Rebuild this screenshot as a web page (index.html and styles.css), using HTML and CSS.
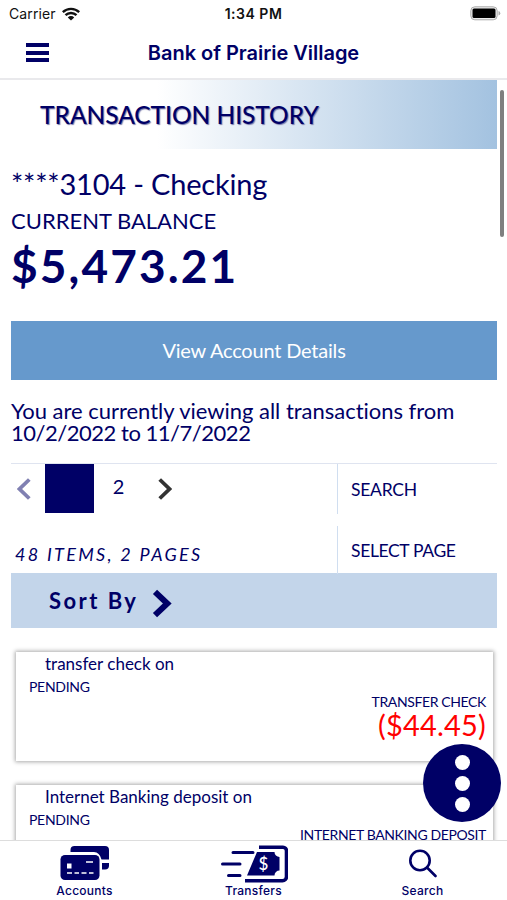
FILE: index.html
```html
<!DOCTYPE html>
<html lang="en">
<head>
<meta charset="utf-8" />
<meta name="viewport" content="width=device-width,initial-scale=1.0" />
<title>Bank of Prairie Village</title>
<link rel="stylesheet" href="styles.css">
</head>
<body>
<div class="app">
	<div class="status-bar">
		<div class="carrier">
			<span>Carrier</span>
			<svg class="wifi" viewBox="0 0 18 14"><path d="M.8 5.2a11.8 11.8 0 0 1 16.4 0" /><path d="M3.5 8.2a7.8 7.8 0 0 1 11 0" /><path class="dot" d="M9 13.6 5.8 10.4a4.6 4.6 0 0 1 6.4 0z" /></svg>
		</div>
		<div class="time">1:34 PM</div>
		<div class="power">
			<svg class="battery" viewBox="0 0 31 15"><rect class="shell" x=".8" y=".8" width="26.4" height="13" rx="4" /><rect x="2.5" y="2.5" width="23" height="9.6" rx="1.5" /><path class="tip" d="M28.5 5v4.6q1.8-.6 1.8-2.3T28.5 5z" /></svg>
		</div>
	</div>
	<div class="nav-bar">
		<a class="btn-menu" href="#" aria-label="Menu"><i></i><i></i><i></i></a>
		<h1>Bank of Prairie Village</h1>
	</div>
	<div class="content">
		<div class="scrollbar"></div>
		<h2 class="banner"><span>TRANSACTION HISTORY</span></h2>
		<div class="account">
			<p class="name">****3104 - Checking</p>
			<p class="label">CURRENT BALANCE</p>
			<p class="balance">$5,473.21</p>
		</div>
		<a class="btn-details" href="#"><span>View Account Details</span></a>
		<p class="range"><span class="line">You are currently viewing all transactions from</span> <span class="line dates">10/2/2022 to 11/7/2022</span></p>
		<div class="pager">
			<div class="pages">
				<svg class="prev" viewBox="0 0 14 22"><path d="M12.3 1.5 2.5 11l9.8 9.5" /></svg>
				<a class="page current" href="#"></a>
				<a class="page" href="#">2</a>
				<svg class="next" viewBox="0 0 14 22"><path d="M1.7 1.5 11.5 11l-9.8 9.5" /></svg>
			</div>
			<a class="tool search" href="#"><span>SEARCH</span></a>
			<p class="count"><span>48 ITEMS, 2 PAGES</span></p>
			<a class="tool select" href="#"><span>SELECT PAGE</span></a>
		</div>
		<div class="sort">
			<span>Sort By</span>
			<svg viewBox="0 0 20 29"><path d="m3 2.8 12.3 11.7L3 26.2" /></svg>
		</div>
		<div class="list">
			<div class="item">
				<p class="desc">transfer check on</p>
				<p class="state">PENDING</p>
				<p class="type">TRANSFER CHECK</p>
				<p class="amount">($44.45)</p>
			</div>
			<div class="item">
				<p class="desc">Internet Banking deposit on</p>
				<p class="state">PENDING</p>
				<p class="type">INTERNET BANKING DEPOSIT</p>
			</div>
		</div>
	</div>
	<a class="btn-more" href="#" aria-label="More"><i></i><i></i><i></i></a>
	<div class="tab-bar">
		<a class="tab" href="#">
			<svg class="icon-accounts" viewBox="0 0 50 36">
				<path d="M10.5 7V5a4 4 0 0 1 4-4H45a4 4 0 0 1 4 4v9.5h-7.5Q39.500 7 34 7z" />
				<path d="M42 18h7v2.5a4 4 0 0 1-4 4h-3z" />
				<rect x=".5" y="10" width="39" height="25" rx="4.5" />
				<rect class="cut" x="7" y="18.5" width="4.5" height="5" />
				<path class="line" d="M26 17h7M7 28h5m2.500 0h4.500m2.500 0h5m2.500 0h4.500" />
			</svg>
			<span>Accounts</span>
		</a>
		<a class="tab" href="#">
			<svg class="icon-transfers" viewBox="0 0 68 38">
				<path class="line" d="M13 7.5h20M2.500 19H20M8.500 30.500H20" />
				<path class="frame" d="M39 2.200h24a3.500 3.500 0 0 1 3.500 3.500v26A4 4 0 0 1 62.500 35.700H25" />
				<path d="M37 7h17.500a5 5 0 0 0 5 5v13.500a5 5 0 0 0-5 5H27z" />
				<text x="43.500" y="25">$</text>
			</svg>
			<span>Transfers</span>
		</a>
		<a class="tab" href="#">
			<svg class="icon-search" viewBox="0 0 28 29"><circle cx="11" cy="11.500" r="9.700" /><path d="m18 18.500 8.500 8.500" /></svg>
			<span>Search</span>
		</a>
	</div>
</div>
</body>
</html>
```
FILE: styles.css
```css
*{margin: 0;padding: 0;box-sizing: border-box;}
html,body {height: 100%;overflow: hidden;}
body{background-color: #fff;color: #000066;font-family: Lato,"Open Sans",sans-serif;}
a{color: inherit;text-decoration: none;}
svg{display: block;fill: currentColor;}
.app {position: relative;display: flex;flex-direction: column;height: 900px;width: 507px;overflow: hidden;}

.status-bar {display: grid;grid-template-columns: 1fr auto 1fr;align-items: center;height: 27px;flex: none;padding: 0 6px 0 9px;color: #111;font: 14px/27px Inter,sans-serif;}
.carrier {display: flex;align-items: center;gap: 6px;letter-spacing: .1px;}
.wifi {width: 18px;height: 14px;fill: none;stroke: currentColor;stroke-width: 2.4;}
.wifi .dot {fill: currentColor;stroke: none;}
.time {font-weight: 600;letter-spacing: .5px;margin-left: -3px;}
.battery {width: 31px;height: 15px;margin-left: auto;color: #000;}
.battery .shell {fill: #eee;stroke: #aaa;}
.battery .tip {fill: #aaa;}

.nav-bar {display: grid;grid-template-columns: 76px 1fr 76px;align-items: center;height: 53px;flex: none;border-bottom: 2px solid #e9e9ec;}
.btn-menu {display: flex;flex-direction: column;gap: 3.5px;margin-left: 26px;width: 23px;}
.btn-menu i {height: 4px;background-color: #000066;}
.nav-bar h1 {text-align: center;font: 600 20px/24px Inter,sans-serif;letter-spacing: -.03px;white-space: nowrap;}

.content {position: relative;flex: 1;min-height: 0;overflow: hidden;padding: 0 10px 0 11px;}
.scrollbar {position: absolute;top: 10px;right: 3px;width: 4px;height: 147px;border-radius: 2px;background-color: #7f7f7f;}
.banner {height: 69px;padding-left: 29px;background-image: linear-gradient(90deg,#fff 30%,#a3c2e0 100%);font-size: 24.5px;line-height: 70px;font-weight: 500;letter-spacing: -.05px;text-shadow: 1px 1px 1px #7777a8;white-space: nowrap;}
.account {height: 172px;padding-top: 17px;white-space: nowrap;}
.account .name {font-size: 29px;line-height: 36px;letter-spacing: -.2px;}
.account .label {font-size: 22px;line-height: 38px;}
.account .balance {font-size: 46px;line-height: 52px;font-weight: 700;letter-spacing: 2.1px;}
.btn-details {display: block;height: 59px;background-color: #6699cc;color: #fff;font-size: 20px;line-height: 59px;text-align: center;letter-spacing: -.2px;}
.range {height: 83px;padding-top: 20px;font-size: 22px;line-height: 22px;white-space: nowrap;}
.range .line {display: block;width: max-content;letter-spacing: -.02px;}
.range .dates {letter-spacing: -.48px;}

.pager {display: grid;grid-template-columns: 326px 1fr;grid-template-rows: 50px 48px;row-gap: 12px;height: 110px;border-top: 1px solid #dfe4f0;}
.pages {display: flex;align-items: center;height: 49px;padding-left: 6px;}
.prev,.next {width: 14px;height: 22px;fill: none;stroke-width: 3.8;}
.prev {stroke: #8080b2;margin-right: 14px;}
.next {stroke: #333;margin-left: 15px;}
.page {width: 49px;height: 49px;font-size: 20px;line-height: 44px;text-align: center;}
.page.current {background-color: #000066;}
.tool {border-left: 1px solid #d0def0;padding-left: 13px;font-size: 17.5px;line-height: 51px;}
.tool.search {letter-spacing: -.25px;}
.tool.select {line-height: 49px;letter-spacing: -.35px;}
.count {padding-left: 4px;font-size: 18px;line-height: 57px;font-style: italic;letter-spacing: 2.3px;white-space: nowrap;}
.sort {display: flex;align-items: center;gap: 14px;height: 55px;padding-left: 38px;background-color: #c3d5ea;font-size: 22px;font-weight: 700;letter-spacing: 2.45px;}
.sort span {padding-bottom: 1px;}
.sort svg {width: 20px;height: 29px;margin-top: 6px;fill: none;stroke: currentColor;stroke-width: 6;}

.list {display: flex;flex-direction: column;gap: 24px;padding: 24px 4px 0 5px;}
.item {height: 109px;flex: none;padding: 1px 7px 0 13px;box-shadow: 0 0 4px 1px #aaa;background-color: #fff;}
.item .desc {padding-left: 16px;font-size: 17px;line-height: 22px;}
.item .state {font-size: 14px;line-height: 24px;letter-spacing: -.3px;}
.item .type {margin-top: -6px;font-size: 14px;line-height: 18px;letter-spacing: -.37px;text-align: right;}
.item .amount {font-size: 29px;line-height: 27px;letter-spacing: .2px;color: #f00;text-align: right;}

.btn-more {position: absolute;left: 423px;top: 744px;z-index: 1;display: flex;flex-direction: column;align-items: center;justify-content: center;gap: 6px;width: 78px;height: 78px;border-radius: 50%;background-color: #000066;}
.btn-more i {width: 15px;height: 15px;border-radius: 50%;background-color: #fff;}

.tab-bar {display: grid;grid-template-columns: repeat(3,1fr);height: 60px;flex: none;border-top: 1px solid #ddd;background-color: #fff;}
.tab {display: flex;flex-direction: column;align-items: center;justify-content: space-between;padding: 4px 0 1px;font: 500 12px/16px Inter,sans-serif;letter-spacing: .25px;}
.icon-accounts {width: 50px;height: 36px;}
.icon-accounts .cut {fill: #fff;}
.icon-accounts .line {fill: none;stroke: #fff;stroke-width: 1.6;}
.icon-transfers {width: 68px;height: 38px;}
.icon-transfers .line,.icon-transfers .frame {fill: none;stroke: currentColor;stroke-width: 3;stroke-linecap: round;}
.icon-transfers .frame {stroke-width: 3.6;stroke-linecap: butt;}
.icon-transfers text {fill: #fff;font: 500 17px Lato,sans-serif;text-anchor: middle;}
.icon-search {width: 28px;height: 29px;margin-top: 4px;fill: none;stroke: currentColor;stroke-width: 2.6;stroke-linecap: round;}
```
